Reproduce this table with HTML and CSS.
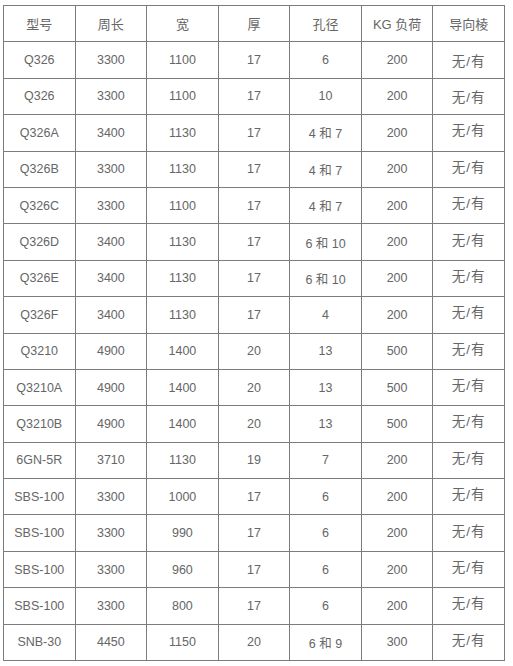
FILE: index.html
```html
<!DOCTYPE html>
<html lang="zh">
<head>
<meta charset="utf-8">
<title>型号规格表</title>
<link rel="stylesheet" href="styles.css">
</head>
<body>
<table class="spec">
  <thead>
    <tr><th>型号</th><th>周长</th><th>宽</th><th>厚</th><th>孔径</th><th>KG 负荷</th><th>导向棱</th></tr>
  </thead>
  <tbody>
    <tr><td>Q326</td><td>3300</td><td>1100</td><td>17</td><td>6</td><td>200</td><td class="opt">无/有</td></tr>
    <tr><td>Q326</td><td>3300</td><td>1100</td><td>17</td><td>10</td><td>200</td><td class="opt">无/有</td></tr>
    <tr><td>Q326A</td><td>3400</td><td>1130</td><td>17</td><td>4 和 7</td><td>200</td><td class="opt up">无/有</td></tr>
    <tr><td>Q326B</td><td>3300</td><td>1130</td><td>17</td><td>4 和 7</td><td>200</td><td class="opt up">无/有</td></tr>
    <tr><td>Q326C</td><td>3300</td><td>1100</td><td>17</td><td>4 和 7</td><td>200</td><td class="opt up">无/有</td></tr>
    <tr><td>Q326D</td><td>3400</td><td>1130</td><td>17</td><td>6 和 10</td><td>200</td><td class="opt up">无/有</td></tr>
    <tr><td>Q326E</td><td>3400</td><td>1130</td><td>17</td><td>6 和 10</td><td>200</td><td class="opt up">无/有</td></tr>
    <tr><td>Q326F</td><td>3400</td><td>1130</td><td>17</td><td>4</td><td>200</td><td class="opt up">无/有</td></tr>
    <tr><td>Q3210</td><td>4900</td><td>1400</td><td>20</td><td>13</td><td>500</td><td class="opt up">无/有</td></tr>
    <tr><td>Q3210A</td><td>4900</td><td>1400</td><td>20</td><td>13</td><td>500</td><td class="opt up">无/有</td></tr>
    <tr><td>Q3210B</td><td>4900</td><td>1400</td><td>20</td><td>13</td><td>500</td><td class="opt up">无/有</td></tr>
    <tr><td>6GN-5R</td><td>3710</td><td>1130</td><td>19</td><td>7</td><td>200</td><td class="opt up">无/有</td></tr>
    <tr><td>SBS-100</td><td>3300</td><td>1000</td><td>17</td><td>6</td><td>200</td><td class="opt up">无/有</td></tr>
    <tr><td>SBS-100</td><td>3300</td><td>990</td><td>17</td><td>6</td><td>200</td><td class="opt up">无/有</td></tr>
    <tr><td>SBS-100</td><td>3300</td><td>960</td><td>17</td><td>6</td><td>200</td><td class="opt up">无/有</td></tr>
    <tr><td>SBS-100</td><td>3300</td><td>800</td><td>17</td><td>6</td><td>200</td><td class="opt up">无/有</td></tr>
    <tr><td>SNB-30</td><td>4450</td><td>1150</td><td>20</td><td>6 和 9</td><td>300</td><td class="opt up">无/有</td></tr>
  </tbody>
</table>
</body>
</html>
```
FILE: styles.css
```css
html, body {
  background: #ffffff;
}
body {
  margin: 5px 0 0 3px;
  font-family: "Liberation Sans", "Noto Sans CJK SC", sans-serif;
  font-size: 12.5px;
  color: #666666;
}
.spec {
  border-collapse: collapse;
  table-layout: fixed;
  width: 502px;
}
.spec th,
.spec td {
  border: 1px solid #7c7c7c;
  text-align: center;
  vertical-align: middle;
  padding: 0;
  font-weight: normal;
  height: 35.4px;
}
.spec th {
  font-size: 13px;
}
.spec td.opt {
  font-size: 13.5px;
  letter-spacing: 1px;
}
.spec td.up {
  padding-bottom: 7px;
  height: 28.4px;
}
```
